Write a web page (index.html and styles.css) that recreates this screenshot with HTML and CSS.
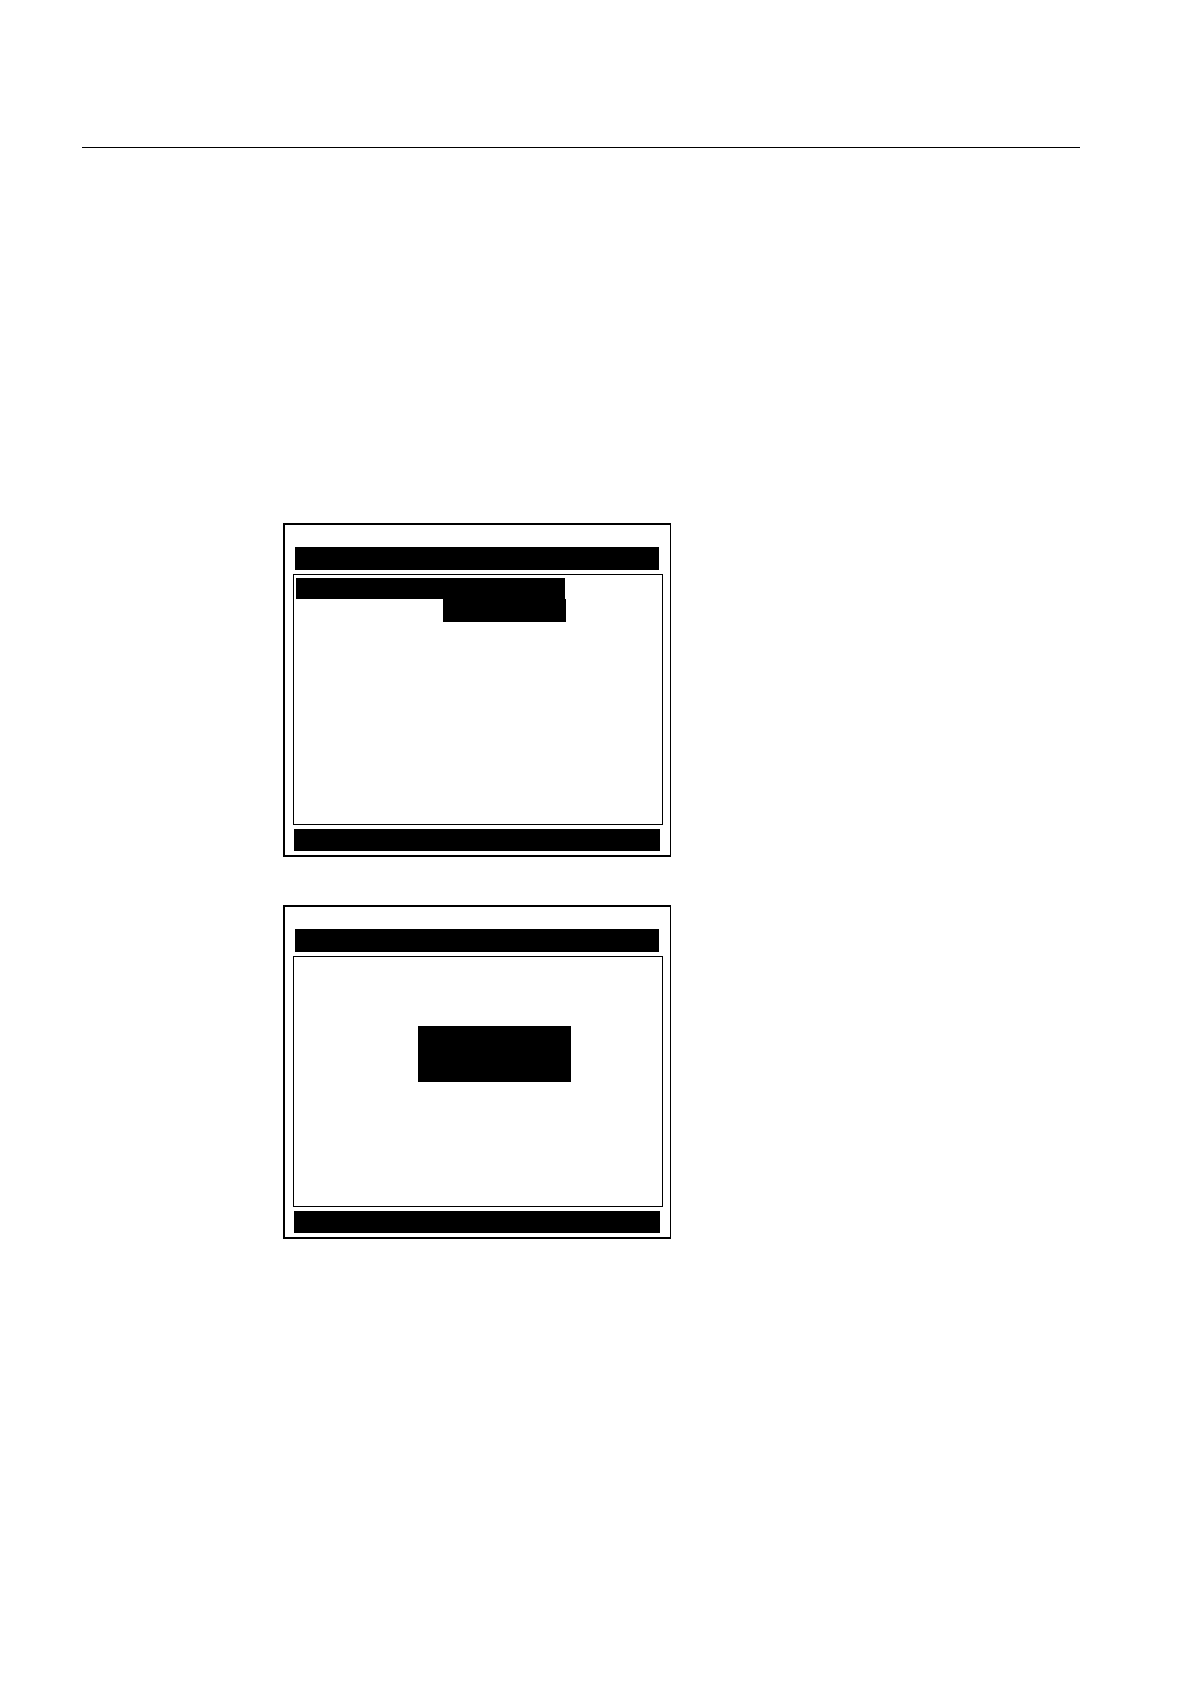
FILE: index.html
```html
<!DOCTYPE html>
<html>
<head>
  <meta charset="utf-8">
  <link rel="stylesheet" href="styles.css">
</head>
<body>
  <main class="page">
    <hr class="page-rule">

    <div class="screens">
      <section class="screen">
        <div class="title-bar"></div>
        <div class="display">
          <div class="menu-bar"></div>
          <div class="menu-item"></div>
        </div>
        <div class="status-bar"></div>
      </section>

      <section class="screen">
        <div class="title-bar"></div>
        <div class="display">
          <div class="message-box"></div>
        </div>
        <div class="status-bar"></div>
      </section>
    </div>
  </main>
</body>
</html>
```

FILE: styles.css
```css
* {
  box-sizing: border-box;
}

body {
  margin: 0;
  background: #fff;
  font-family: "Liberation Sans", Arial, sans-serif;
}

.page {
  padding: 147px 110px 147px 82px;
}

.page-rule {
  height: 1px;
  margin: 0;
  border: 0;
  background: #000;
}

.screens {
  display: flex;
  flex-direction: column;
  gap: 48px;
  max-width: 589px;
  padding: 375px 0 0 201px;
}

.screen {
  display: flex;
  flex-direction: column;
  gap: 4px;
  padding: 22px 7px 4px 8px;
  border: 2px solid #000;
  border-right-width: 1px;
}

.title-bar {
  height: 23px;
  margin: 0 4px 0 2px;
  background: #000;
}

.display {
  height: 251px;
  padding: 3px 2px;
  border: 1px solid #000;
}

.status-bar {
  height: 22px;
  margin: 0 3px 0 1px;
  background: #000;
}

.menu-bar {
  width: 269px;
  height: 21px;
  background: #000;
}

.menu-item {
  width: 123px;
  height: 23px;
  margin-left: 147px;
  background: #000;
}

.message-box {
  width: 153px;
  height: 56px;
  margin: 66px 0 0 122px;
  background: #000;
}
```
